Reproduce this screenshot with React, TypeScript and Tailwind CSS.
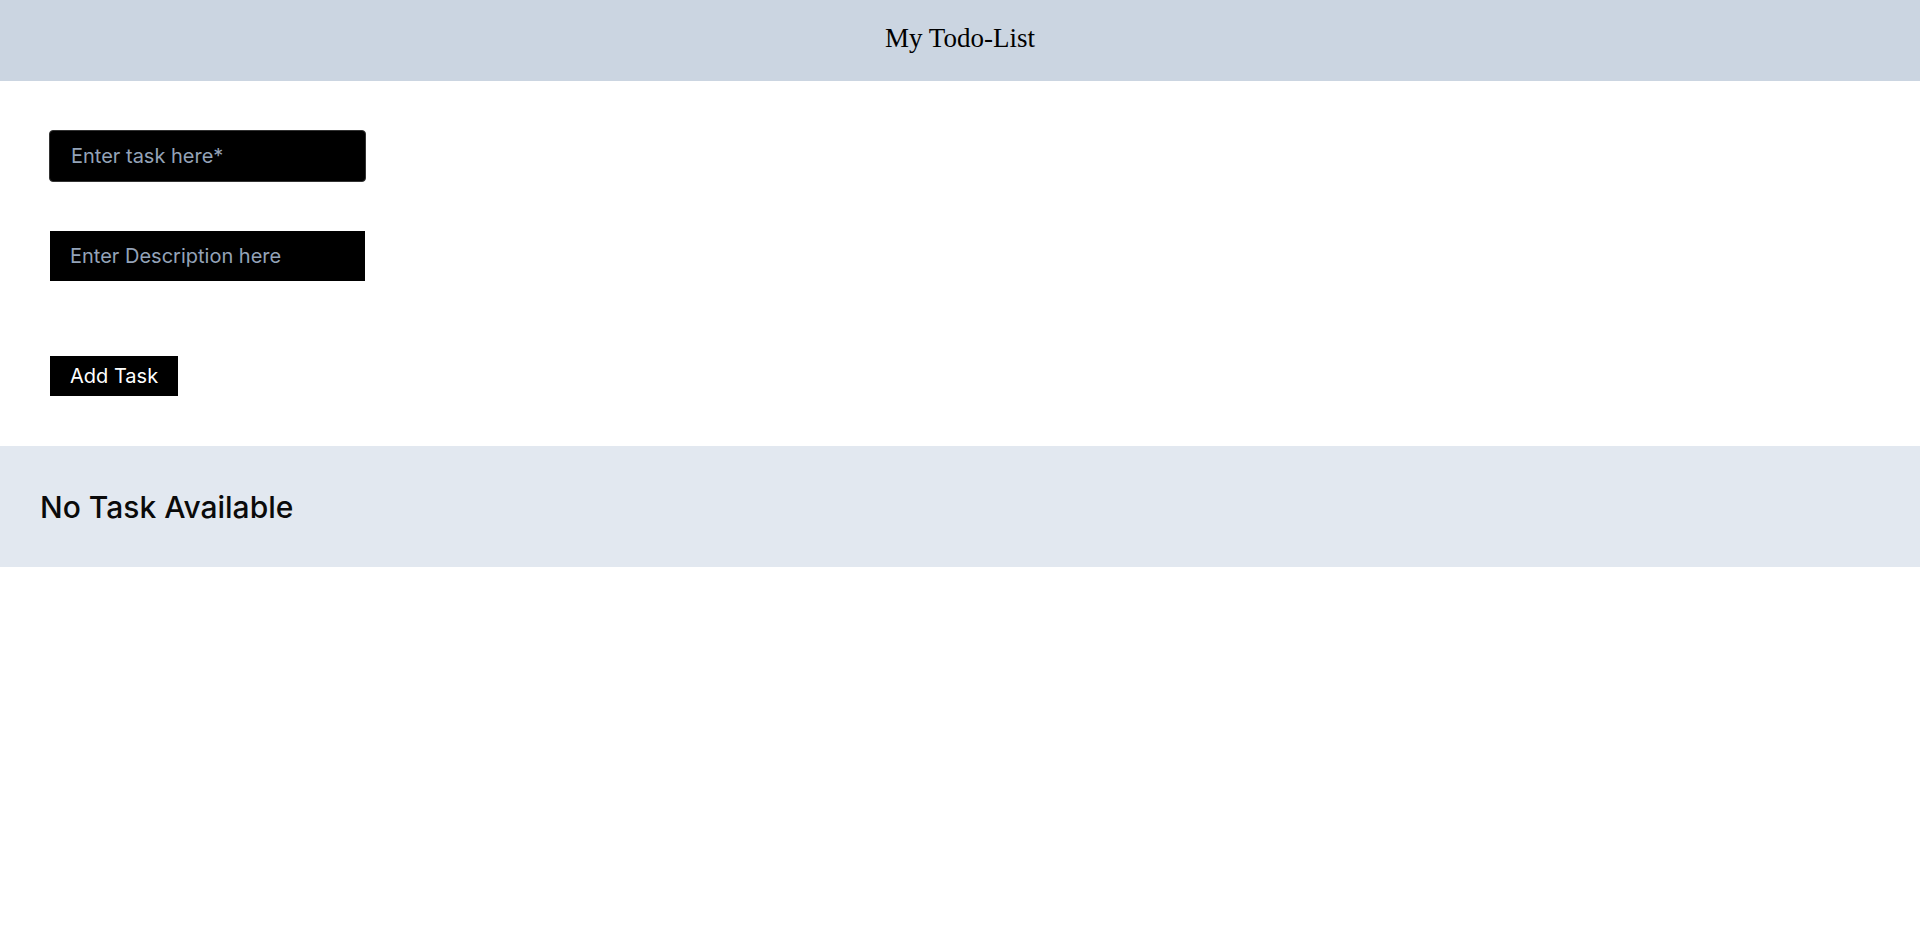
import { useState } from 'react'

export default function App() {
  const [title, setTitle] = useState('')
  const [desc, setDesc] = useState('')

  return (
    <div className="min-h-screen bg-white font-['Inter','Noto_Sans',sans-serif]">
      <header className="flex h-[81px] items-center justify-center bg-[#cbd5e1] pb-[4px]">
        <h1 className="font-['Liberation_Serif',serif] text-[27px] text-black">My Todo-List</h1>
      </header>

      <form
        className="flex flex-col items-start pl-[49px] pt-[49px] pb-[50px]"
        onSubmit={(e) => e.preventDefault()}
      >
        <input
          value={title}
          onChange={(e) => setTitle(e.target.value)}
          placeholder="Enter task here*"
          className="h-[52px] w-[317px] rounded-[4px] border border-[#333] bg-black pl-[21px] text-[20px] text-white outline-none placeholder:text-[#94a3b8]"
        />
        <input
          value={desc}
          onChange={(e) => setDesc(e.target.value)}
          placeholder="Enter Description here"
          className="ml-px mt-[49px] h-[50px] w-[315px] bg-black pl-[20px] text-[20px] text-white outline-none placeholder:text-[#94a3b8]"
        />
        <button
          type="submit"
          className="ml-px mt-[75px] h-[40px] w-[128px] bg-black text-left pl-[20px] text-[20px] text-white"
        >
          Add Task
        </button>
      </form>

      <section className="flex h-[121px] items-center bg-[#e2e8f0] pl-[40px] pt-[2px]">
        <h2 className="text-[30px] font-[550] text-[#0a0a0a]">No Task Available</h2>
      </section>
    </div>
  )
}
